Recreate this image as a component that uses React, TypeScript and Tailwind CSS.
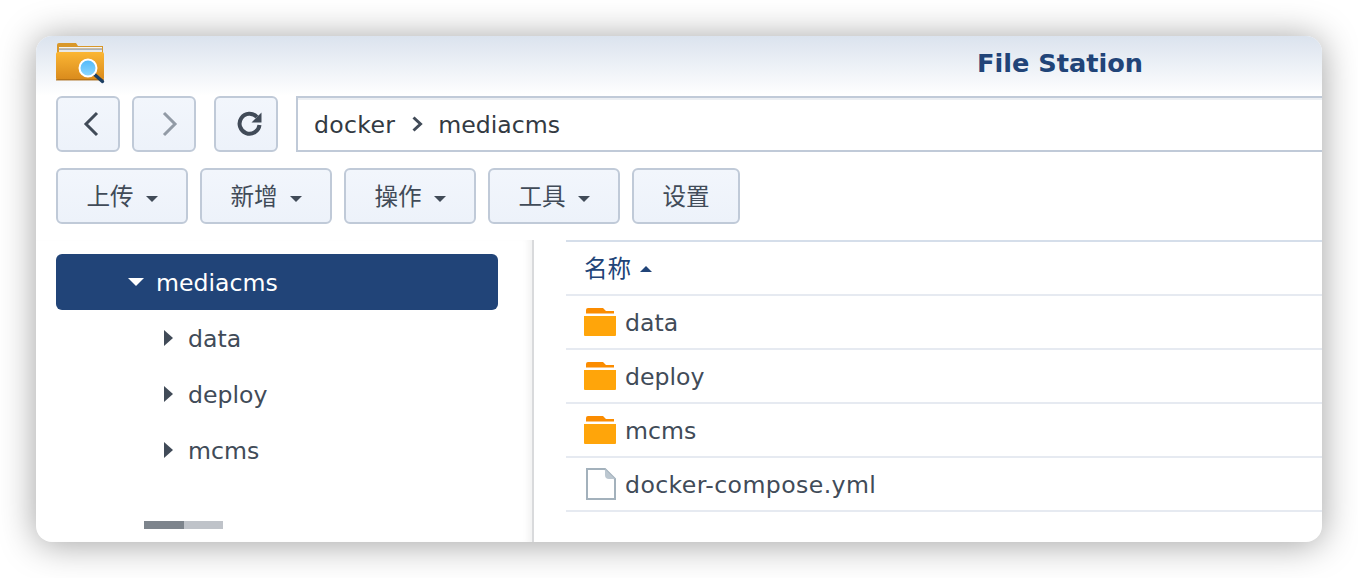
import { type ReactNode } from "react";

function Caret() {
  return <span className="ml-3 mt-[2px] h-0 w-0 border-x-[6px] border-t-[6px] border-x-transparent border-t-[#414b58]" />;
}

function ToolButton({ className, children }: { className: string; children: ReactNode }) {
  return (
    <button
      type="button"
      className={`flex h-14 items-center justify-center rounded-md border-2 border-[#c0cad8] bg-gradient-to-b from-[#f2f6fc] to-[#edf2fa] text-[#414b58] ${className}`}
    >
      {children}
    </button>
  );
}

function AppIcon() {
  return (
    <svg width="50" height="44" viewBox="0 0 50 44" className="block">
      <defs>
        <linearGradient id="fold" x1="0" y1="0" x2="0" y2="1">
          <stop offset="0" stopColor="#fbb634" />
          <stop offset="1" stopColor="#d98a1c" />
        </linearGradient>
        <linearGradient id="lens" x1="0" y1="0" x2="0" y2="1">
          <stop offset="0" stopColor="#4fb8f8" />
          <stop offset="1" stopColor="#8fd8ff" />
        </linearGradient>
      </defs>
      <path d="M1 3 Q1 1 3 1 H20 L22 4 H47 V12 H1 Z" fill="#d9982a" />
      <rect x="3" y="5" width="43" height="1.5" fill="#f4f4f4" />
      <rect x="3" y="6.5" width="43" height="1.5" fill="#aab0b8" />
      <rect x="3" y="8" width="43" height="2" fill="#e8e8e8" />
      <path d="M0 12 Q0 10 2 10 H46 Q48 10 48 12 V36 Q48 38 46 38 H2 Q0 38 0 36 Z" fill="url(#fold)" />
      <rect x="0" y="37" width="48" height="1.6" fill="#a96a12" opacity="0.7" />
      <path d="M38 32 L46.5 39.5" stroke="#1d3f63" strokeWidth="3.4" strokeLinecap="round" />
      <circle cx="32" cy="26" r="8.5" fill="url(#lens)" stroke="#fff" strokeWidth="2" />
    </svg>
  );
}

function Folder() {
  return (
    <svg width="32" height="28" viewBox="0 0 32 28" className="block shrink-0">
      <path d="M2 2 Q2 0 4 0 H19 L22 3 H30 V5.5 H2 Z" fill="#fb8c00" />
      <path d="M0 8 H32 V27 Q32 28 31 28 H1 Q0 28 0 27 Z" fill="#ffa50a" />
    </svg>
  );
}

function FileIcon() {
  return (
    <svg width="32" height="32" viewBox="0 0 32 32" className="block shrink-0">
      <path d="M3 1 H21 L31 11 V31 H3 Z" fill="#fff" stroke="#a3b1bc" strokeWidth="2" />
      <path d="M21 1 L31 11 H25 Q21 11 21 7 Z" fill="#bcc7d0" />
    </svg>
  );
}

function TreeRow({ name }: { name: string }) {
  return (
    <div className="flex h-14 items-center pl-[127px] text-[#414b58]">
      <span className="ml-px h-0 w-0 border-y-[8px] border-l-[9px] border-y-transparent border-l-[#414b58]" />
      <span className="ml-[15px] pt-1">{name}</span>
    </div>
  );
}

function FileRow({ name, file }: { name: string; file?: boolean }) {
  return (
    <div className="flex h-[54px] items-center border-b-2 border-[#e6eaf1] pl-[18px] text-[#414b58]">
      {file ? <FileIcon /> : <Folder />}
      <span className={`ml-[9px] pt-1 ${file ? "tracking-[0.4px]" : ""}`}>{name}</span>
    </div>
  );
}

export default function App() {
  return (
    <div
      className="h-[578px] w-[1358px] overflow-hidden bg-white pl-9 pt-9 text-[23.6px]"
      style={{ fontFamily: '"DejaVu Sans", "Noto Sans CJK SC", sans-serif' }}
    >
      <div className="h-[506px] w-[1286px] overflow-hidden rounded-2xl bg-white shadow-[0_2px_36px_rgba(0,0,0,0.38)]">
        {/* Title bar */}
        <div className="flex h-[60px] bg-gradient-to-b from-[#dbe3ee] to-white pl-5 pt-[6px]">
          <AppIcon />
          <h1 className="ml-[871px] mt-[3px] text-[25.6px] font-bold leading-[36px] text-[#214478]">File Station</h1>
        </div>

        {/* Navigation row */}
        <div className="flex h-14 pl-5">
          <ToolButton className="w-16">
            <svg width="20" height="28" viewBox="0 0 20 28" className="ml-[6px]">
              <path d="M16 3 L5 14 L16 25" fill="none" stroke="#414b58" strokeWidth="3" />
            </svg>
          </ToolButton>
          <ToolButton className="ml-3 w-16">
            <svg width="20" height="28" viewBox="0 0 20 28" className="ml-[11px]">
              <path d="M4 3 L15 14 L4 25" fill="none" stroke="#929ba6" strokeWidth="3" />
            </svg>
          </ToolButton>
          <ToolButton className="ml-[18px] w-16">
            <svg width="28" height="28" viewBox="0 0 28 28" className="ml-2">
              <path d="M21 7 A10 10 0 1 0 23.5 15" fill="none" stroke="#414b58" strokeWidth="4" />
              <path d="M25.5 2.5 V12.5 H15.5 Z" fill="#414b58" />
            </svg>
          </ToolButton>
          <div className="ml-[18px] flex flex-1 items-center border-y-2 border-l-2 border-[#c0cad8] pl-4 text-[#333a42] shadow-[inset_0_2px_0_#eceff3]">
            <span className="pt-1 tracking-[0.3px]">docker</span>
            <svg width="14" height="16" viewBox="0 0 14 16" className="ml-[16px] mr-[13px]">
              <path d="M2.5 1.5 L9.5 8 L2.5 14.5" fill="none" stroke="#414b58" strokeWidth="3" />
            </svg>
            <span className="pt-1">mediacms</span>
          </div>
        </div>

        {/* Action row */}
        <div className="mt-4 flex gap-3 pl-5">
          <ToolButton className="w-[132px] pt-1">上传<Caret /></ToolButton>
          <ToolButton className="w-[132px] pt-1">新增<Caret /></ToolButton>
          <ToolButton className="w-[132px] pt-1">操作<Caret /></ToolButton>
          <ToolButton className="w-[132px] pt-1">工具<Caret /></ToolButton>
          <ToolButton className="w-[108px] pt-1">设置</ToolButton>
        </div>

        {/* Tree and file list */}
        <div className="mt-4 flex h-[302px]">
          <aside className="flex w-[498px] flex-col border-r-2 border-[#d9dadc] pl-5 pr-[34px] shadow-[inset_-8px_0_6px_-4px_#f3f3f3]">
            <div className="mt-[14px] flex h-14 shrink-0 items-center rounded-md bg-[#214478] pl-[72px] text-white">
              <span className="h-0 w-0 border-x-[8px] border-t-[8px] border-x-transparent border-t-white" />
              <span className="ml-3 pt-1">mediacms</span>
            </div>
            <div className="-ml-5">
              <TreeRow name="data" />
              <TreeRow name="deploy" />
              <TreeRow name="mcms" />
            </div>
            <div className="ml-[88px] mt-[43px] flex h-2 w-[79px] bg-[#bfc3c9]">
              <div className="w-10 bg-[#7d848c]" />
            </div>
          </aside>
          <main className="ml-8 flex-1">
            <div className="flex h-14 items-center border-y-2 border-t-[#d5deea] border-b-[#e6eaf1] pl-[18px] text-[#214478]">
              <span className="pt-1">名称</span>
              <span className="ml-[9px] mt-[2px] h-0 w-0 border-x-[6px] border-b-[6px] border-x-transparent border-b-[#214478]" />
            </div>
            <FileRow name="data" />
            <FileRow name="deploy" />
            <FileRow name="mcms" />
            <FileRow name="docker-compose.yml" file />
          </main>
        </div>
      </div>
    </div>
  );
}
